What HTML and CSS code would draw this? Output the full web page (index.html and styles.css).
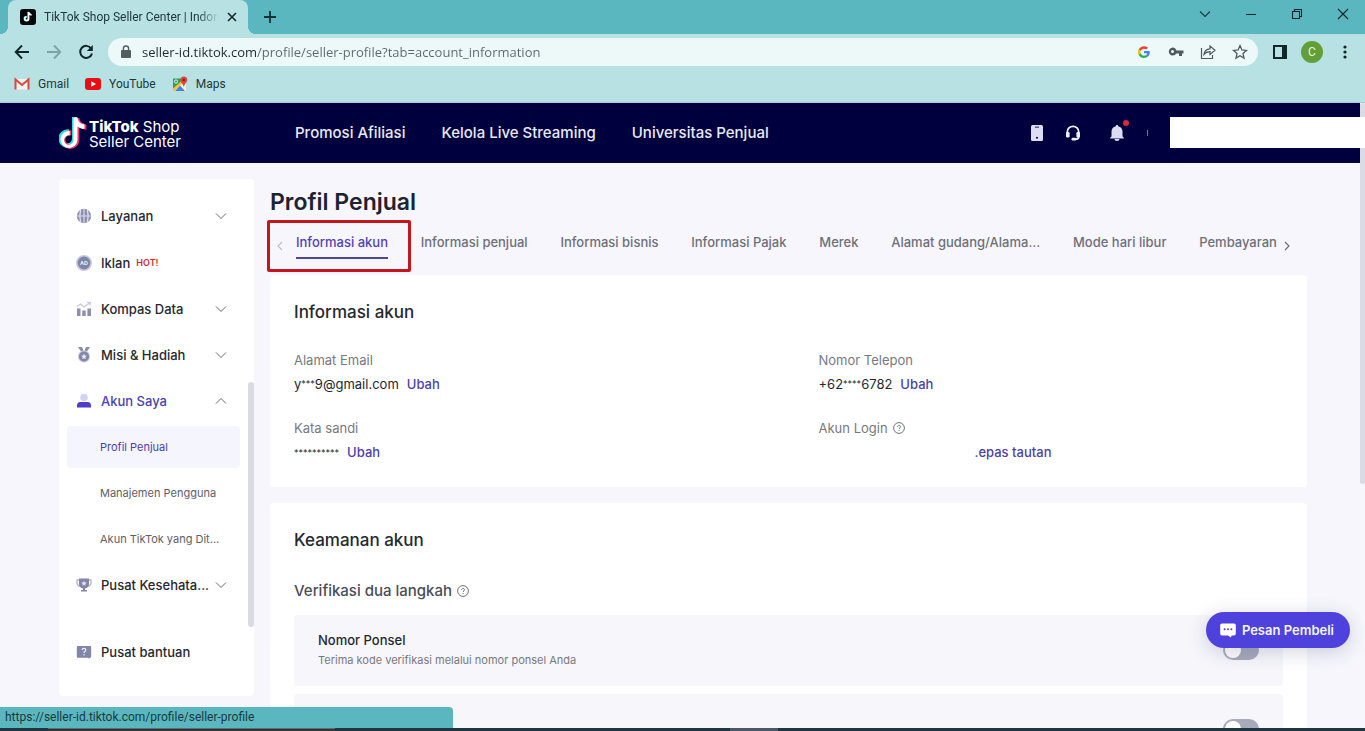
FILE: index.html
```html
<!DOCTYPE html>
<html lang="id">
<head>
<meta charset="utf-8">
<meta name="viewport" content="width=device-width, initial-scale=1">
<title>TikTok Shop Seller Center | Indonesia</title>
<link rel="stylesheet" href="styles.css">
</head>
<body>
<div class="window">
  <div class="tabstrip">
    <div class="browser-tab">
      <svg class="favicon" viewBox="0 0 16 16" width="16" height="16" aria-hidden="true"><rect width="16" height="16" rx="3" fill="#05080a"/><path d="M8.6 3v6.8a1.9 1.9 0 1 1-1.9-1.9M8.6 3.2c.3 1.6 1.4 2.6 3 2.8" fill="none" stroke="#25d5d0" stroke-width="1.7" transform="translate(-.4 -.3)"/><path d="M8.6 3v6.8a1.9 1.9 0 1 1-1.9-1.9M8.6 3.2c.3 1.6 1.4 2.6 3 2.8" fill="none" stroke="#fff" stroke-width="1.6"/></svg>
      <span class="browser-tab-title">TikTok Shop Seller Center | Indon</span>
      <button class="plain" aria-label="Tutup tab"><svg width="10" height="10" viewBox="0 0 10 10"><path d="M1 1l8 8M9 1L1 9" stroke="#1b2c30" stroke-width="1.7"/></svg></button>
    </div>
    <button class="plain new-tab" aria-label="Tab baru"><svg width="14" height="14" viewBox="0 0 14 14"><path d="M7 1v12M1 7h12" stroke="#123238" stroke-width="1.8"/></svg></button>
    <div class="window-controls">
      <button class="plain" aria-label="Cari tab"><svg width="12" height="12" viewBox="0 0 12 12"><path d="M1 3.500l5 5 5-5" fill="none" stroke="#14383e" stroke-width="1.1"/></svg></button>
      <button class="plain" aria-label="Perkecil"><svg width="12" height="12" viewBox="0 0 12 12"><path d="M1 6.500h10" stroke="#0d2328"/></svg></button>
      <button class="plain" aria-label="Pulihkan"><svg width="12" height="12" viewBox="0 0 12 12"><path d="M1.500 3.500h7v7h-7zM3.500 3.500v-2h7v7h-2" fill="none" stroke="#0d2328" stroke-width="1.100"/></svg></button>
      <button class="plain" aria-label="Tutup"><svg width="12" height="12" viewBox="0 0 12 12"><path d="M1 1l10 10M11 1L1 11" stroke="#0d2328" stroke-width="1.100"/></svg></button>
    </div>
  </div>

  <div class="toolbar">
    <div class="history">
      <button class="plain" aria-label="Kembali"><svg width="16" height="16" viewBox="0 0 16 16"><path d="M15 8H2M8 1.500L1.700 8 8 14.500" fill="none" stroke="#12262a" stroke-width="1.900"/></svg></button>
      <button class="plain" aria-label="Maju"><svg width="16" height="16" viewBox="0 0 16 16"><path d="M1 8h13M8 1.500L14.300 8 8 14.500" fill="none" stroke="#7fa3a6" stroke-width="1.900"/></svg></button>
      <button class="plain" aria-label="Muat ulang"><svg width="16" height="16" viewBox="0 0 16 16"><path d="M13.200 4.500A6 6 0 1 0 14 9.500" fill="none" stroke="#12262a" stroke-width="2"/><path d="M14.800 1v6H8.800z" fill="#12262a"/></svg></button>
    </div>
    <div class="omnibox">
      <svg width="10" height="14" viewBox="0 0 10 14" aria-hidden="true"><path d="M1 5h8a1 1 0 0 1 1 1v6a1 1 0 0 1-1 1H1a1 1 0 0 1-1-1V6a1 1 0 0 1 1-1z" fill="#555c60"/><path d="M2.400 5.500V3.600a2.600 2.600 0 0 1 5.200 0v1.900" fill="none" stroke="#555c60" stroke-width="1.400"/></svg>
      <input class="address" type="text" aria-label="Alamat situs" value="seller-id.tiktok.com/profile/seller-profile?tab=account_information">
      <div class="omnibox-actions">
        <svg width="12" height="12" viewBox="0 0 48 48" aria-hidden="true"><path fill="#ea4335" d="M24 10.500c3.500 0 6.700 1.200 9.200 3.600l6.900-6.900C35.900 3.400 30.500 1 24 1 14.600 1 6.500 6.400 2.600 14.200l8 6.200C12.500 14.700 17.700 10.500 24 10.500z"/><path fill="#4285f4" d="M47 24.500c0-1.600-.2-3.100-.4-4.500H24v9h12.900c-.6 3-2.200 5.500-4.700 7.200l7.700 6C44.400 38 47 31.800 47 24.500z"/><path fill="#fbbc05" d="M10.500 28.600a14.500 14.500 0 0 1 0-9.200l-8-6.200a24 24 0 0 0 0 21.600z"/><path fill="#34a853" d="M24 48c6.500 0 11.900-2.100 15.900-5.800l-7.700-6c-2.200 1.500-4.900 2.300-8.200 2.300-6.300 0-11.600-4.200-13.500-9.900l-8 6.200C6.500 42.600 14.600 48 24 48z"/></svg>
        <button class="plain" aria-label="Sandi"><svg width="16" height="16" viewBox="0 0 16 16"><path d="M4.500 3.500a4 4 0 0 1 3.800 3H15.500v3h-1.500v2.500h-3V9.500H8.300a4 4 0 1 1-3.800-6zm0 2.600a1.500 1.500 0 1 0 0 3 1.500 1.500 0 0 0 0-3z" fill="#50595c" fill-rule="evenodd"/></svg></button>
        <button class="plain" aria-label="Bagikan"><svg width="16" height="16" viewBox="0 0 16 16"><path d="M1.500 4v10.500h11V11M4 10.500c.3-3.500 2.300-5.500 6-5.700V2l5 4.200-5 4.200V7.700C7.500 7.700 5.500 8.500 4 10.500z" fill="none" stroke="#50595c" stroke-width="1.200"/></svg></button>
        <button class="plain" aria-label="Tandai"><svg width="16" height="16" viewBox="0 0 16 16"><path d="M8 1.600l1.900 4.300 4.600.5-3.500 3.100 1 4.600L8 11.700l-4 2.400 1-4.600L1.500 6.400l4.600-.5z" fill="none" stroke="#50595c" stroke-width="1.300"/></svg></button>
      </div>
    </div>
    <div class="toolbar-end">
      <button class="plain" aria-label="Panel samping"><svg width="14" height="14" viewBox="0 0 14 14"><path d="M1 1h12v12H1z" fill="none" stroke="#12262a" stroke-width="2"/><path d="M9 1h4v12H9z" fill="#12262a"/></svg></button>
      <button class="plain avatar" aria-label="Profil C">C</button>
      <button class="plain" aria-label="Menu"><svg width="4" height="14" viewBox="0 0 4 14"><g fill="#12262a"><circle cx="2" cy="2" r="1.600"/><circle cx="2" cy="7" r="1.600"/><circle cx="2" cy="12" r="1.600"/></g></svg></button>
    </div>
  </div>

  <nav class="bookmarks" aria-label="Bookmark">
    <a href="#gmail"><svg width="16" height="16" viewBox="0 0 16 16" aria-hidden="true"><path d="M2 3h12v10.500H2z" fill="#f5f2ef"/><path d="M1.500 13.500v-10L8 9l6.500-5.500v10" fill="none" stroke="#d8493e" stroke-width="2"/></svg>Gmail</a>
    <a href="#youtube"><svg width="16" height="16" viewBox="0 0 16 16" aria-hidden="true"><rect y="2" width="16" height="12" rx="3" fill="#e60f12"/><path d="M6.300 5.200v5.600L11 8z" fill="#fff"/></svg>YouTube</a>
    <a href="#maps"><svg width="16" height="16" viewBox="0 0 16 16" aria-hidden="true"><path d="M1 2.500h9.500L13 15H1z" fill="#2f9f58"/><path d="M1 13L12 4l2 3v8H1z" fill="#f4f3df"/><path d="M3 15l5-5.500 5 5.500z" fill="#4a7fe0"/><path d="M1 12.500L9.500 5l1 2L2.500 15H1z" fill="#f2c534"/><circle cx="4" cy="5.500" r="1.600" fill="none" stroke="#eef7f0"/><path d="M11.800.5a3.500 3.500 0 0 1 3.500 3.500c0 2.200-2.300 3.200-3.300 6.500h-.4C10.600 7.200 8.300 6.200 8.300 4A3.500 3.500 0 0 1 11.800.5z" fill="#d9493b"/><circle cx="11.800" cy="4" r="1.200" fill="#7c201b"/></svg>Maps</a>
  </nav>

  <div class="viewport">
    <div class="page">
      <header class="site-header">
        <a class="logo" href="#home" aria-label="TikTok Shop Seller Center">
          <svg width="28" height="32" viewBox="0 0 28 32" aria-hidden="true"><path d="M13 0h5c.4 3.600 3 6.200 7 6.500v5c-2.600 0-5-.8-7-2.300V22A9.300 9.300 0 1 1 8.700 12.300h1.300v5.200a4.500 4.500 0 1 0 3 4.300z" fill="#38d9df"/><path d="M13 0h5c.4 3.600 3 6.200 7 6.500v5c-2.600 0-5-.8-7-2.300V22A9.300 9.300 0 1 1 8.700 12.300h1.300v5.200a4.500 4.500 0 1 0 3 4.300z" fill="#ea3c67" transform="translate(2.400 1)"/><path d="M13 0h4c.4 4 3 6.600 7 6.900v4.300c-2.600 0-5-.8-7-2.300V22A8.500 8.500 0 1 1 8.700 13.500h.5v4.400a4.700 4.700 0 1 0 3.800 4.300z" fill="#fff" transform="translate(1.500 .5)"/></svg>
          <span class="logo-text"><span><b>TikTok</b> Shop</span><span>Seller Center</span></span>
        </a>
        <nav class="main-nav" aria-label="Utama">
          <a href="#afiliasi">Promosi Afiliasi</a>
          <a href="#live">Kelola Live Streaming</a>
          <a href="#universitas">Universitas Penjual</a>
        </nav>
        <div class="header-tools">
          <button class="plain" aria-label="Aplikasi seluler"><svg width="12" height="16" viewBox="0 0 12 16"><rect width="12" height="16" rx="1.500" fill="#dcdcf3"/><path d="M4 1.500h4v1.500H4z" fill="#5b5b8c"/><circle cx="6" cy="12.800" r="1" fill="#01003f"/></svg></button>
          <button class="plain" aria-label="Dukungan"><svg width="16" height="16" viewBox="0 0 16 16"><path d="M2.300 8.500V7a5.700 5.700 0 0 1 11.400 0v5c0 1.400-1 2.200-3 2.200" fill="none" stroke="#f1f1fb" stroke-width="1.800"/><rect x="1" y="7" width="3.600" height="5.500" rx="1.300" fill="#f1f1fb"/><rect x="11.400" y="7" width="3.600" height="5.500" rx="1.300" fill="#f1f1fb"/><rect x="6.500" y="12.800" width="5" height="2.800" rx="1.400" fill="#f1f1fb"/></svg></button>
          <button class="plain bell" aria-label="Notifikasi"><svg width="14" height="16" viewBox="0 0 14 16"><path d="M7 0c.8 0 1.200.5 1.200 1.200 2.600.6 4.300 2.600 4.300 5.300v5l1.300 1.300v.7H.2v-.7l1.300-1.300v-5c0-2.700 1.700-4.700 4.300-5.300C5.800.5 6.200 0 7 0zM4.500 14h5a2.500 2 0 0 1-5 0z" fill="#dcdcf3"/></svg></button>
          <span class="tool-divider"></span>
        </div>
        <div class="account-cover"></div>
      </header>

      <div class="body">
        <aside class="sidebar">
          <nav class="side-nav" aria-label="Menu penjual">
            <a class="side-item tall" href="#layanan"><svg width="16" height="16" viewBox="0 0 16 16"><circle cx="8" cy="8" r="7.200" fill="#8c8fae"/><path d="M8 1v14M1 8h14M4.800 1.500C3.500 6 3.500 10 4.800 14.500M11.200 1.500c1.300 4.500 1.300 8.500 0 13" fill="none" stroke="#dfe0f2" stroke-width="1.100"/></svg><span>Layanan</span><svg class="chev" viewBox="0 0 12 12"><path d="M1 3.500l5 5 5-5"/></svg></a>
            <a class="side-item tall" href="#iklan"><svg width="16" height="16" viewBox="0 0 16 16"><circle cx="8" cy="8" r="8" fill="#c9cae0"/><circle cx="8" cy="8" r="6.400" fill="#8285a8"/><text x="8" y="10.200" class="ad-text">AD</text></svg><span>Iklan</span><span class="hot">HOT!</span></a>
            <a class="side-item" href="#kompas"><svg width="16" height="16" viewBox="0 0 16 16"><path d="M1 7.500h3.500V15H1zM6.200 9.500h3.500V15H6.200zM11.400 7.500H15V15h-3.600z" fill="#8c8fae"/><path d="M1 5.500l3.500-2.500 3.500 3 5.500-4M11 1.200l3.500.3-.8 3.200" fill="none" stroke="#c5c6dc" stroke-width="1.100"/></svg><span>Kompas Data</span><svg class="chev" viewBox="0 0 12 12"><path d="M1 3.500l5 5 5-5"/></svg></a>
            <a class="side-item" href="#misi"><svg width="16" height="16" viewBox="0 0 16 16"><path d="M2 0h4l1.500 3.500-2.500 1zM14 0h-4L8.500 3.500l2.500 1z" fill="#8c8f9f"/><circle cx="8" cy="9.500" r="6" fill="#c5c6dc"/><circle cx="8" cy="9.500" r="5" fill="#8285a8"/><path d="M8 6.600l.9 1.900 2 .3-1.500 1.400.4 2L8 11.200l-1.800 1 .4-2-1.500-1.400 2-.3z" fill="#e6e6f6"/></svg><span>Misi &amp; Hadiah</span><svg class="chev" viewBox="0 0 12 12"><path d="M1 3.500l5 5 5-5"/></svg></a>
            <a class="side-item active" href="#akun"><svg width="16" height="16" viewBox="0 0 16 16"><circle cx="8" cy="4.500" r="3.800" fill="#d5d3f5"/><path d="M1 14.500v-2.500A3.500 3.500 0 0 1 4.500 9h7A3.500 3.500 0 0 1 15 12v2.500z" fill="#4d3dc8"/></svg><span>Akun Saya</span><svg class="chev" viewBox="0 0 12 12"><path d="M1 8.500l5-5 5 5"/></svg></a>
            <a class="sub-item current" href="#profil">Profil Penjual</a>
            <a class="sub-item" href="#pengguna">Manajemen Pengguna</a>
            <a class="sub-item" href="#tiktok">Akun TikTok yang Dit...</a>
            <a class="side-item" href="#kesehatan"><svg width="16" height="16" viewBox="0 0 16 16"><path d="M3.500 3H1v3c0 2 1.300 3 3 3M12.500 3H15v3c0 2-1.300 3-3 3" fill="none" stroke="#b4b6d0" stroke-width="1.300"/><path d="M3 1.500h10V7c0 2.500-1.600 4-4 4.500V13h2v1.500H5V13h2v-1.500C4.600 11 3 9.500 3 7z" fill="#8285a8"/><path d="M8 3.700l.8 1.700 1.800.2-1.300 1.300.3 1.800L8 7.800l-1.600.9.300-1.800-1.300-1.300 1.800-.2z" fill="#e6e6f6"/></svg><span>Pusat Kesehata...</span><svg class="chev" viewBox="0 0 12 12"><path d="M1 3.500l5 5 5-5"/></svg></a>
          </nav>
          <a class="side-item help" href="#bantuan"><svg width="16" height="16" viewBox="0 0 16 16"><path d="M2 2h12a1.200 1.200 0 0 1 1.200 1.200v9.300A1.200 1.200 0 0 1 14 13.700l-1 .8-1.600-.8H2A1.200 1.200 0 0 1 .8 12.500V3.200A1.200 1.200 0 0 1 2 2z" fill="#8285a8"/><path d="M6.200 6c0-2.300 3.600-2.300 3.600 0 0 1.300-1.800 1.400-1.800 3M8 10.300v1.300" fill="none" stroke="#f0f0fb" stroke-width="1.200"/></svg><span>Pusat bantuan</span></a>
          <span class="side-scroll"></span>
        </aside>

        <main class="main">
          <h1>Profil Penjual</h1>
          <div class="tabs">
            <button class="plain arrow faded" aria-label="Sebelumnya"><svg width="6" height="10" viewBox="0 0 6 10"><path d="M5 1L1 5l4 4" fill="none" stroke="currentColor" stroke-width="1.100"/></svg></button>
            <nav class="tab-list" aria-label="Tab profil">
              <a class="tab selected" href="#t1">Informasi akun<span class="highlight"></span></a>
              <a class="tab" href="#t2">Informasi penjual</a>
              <a class="tab" href="#t3">Informasi bisnis</a>
              <a class="tab" href="#t4">Informasi Pajak</a>
              <a class="tab" href="#t5">Merek</a>
              <a class="tab" href="#t6">Alamat gudang/Alama...</a>
              <a class="tab" href="#t7">Mode hari libur</a>
              <a class="tab" href="#t8">Pembayaran</a>
            </nav>
            <button class="plain arrow" aria-label="Berikutnya"><svg width="6" height="10" viewBox="0 0 6 10"><path d="M1 1l4 4-4 4" fill="none" stroke="currentColor" stroke-width="1.100"/></svg></button>
          </div>

          <section class="card">
            <h2>Informasi akun</h2>
            <dl class="fields">
              <div><dt>Alamat Email</dt><dd><span>y<span class="mask">***</span>9@gmail.com</span> <a href="#email">Ubah</a></dd></div>
              <div><dt>Nomor Telepon</dt><dd><span>+62<span class="mask">****</span>6782</span> <a href="#telepon">Ubah</a></dd></div>
              <div><dt>Kata sandi</dt><dd><span class="mask">**********</span> <a href="#sandi">Ubah</a></dd></div>
              <div><dt>Akun Login <svg class="q" viewBox="0 0 12 12"><circle cx="6" cy="6" r="5.400"/><path d="M4.600 4.900c0-2 2.900-2 2.900-.1 0 1-1.400 1-1.400 2.200M6.100 8v1"/></svg></dt><dd class="login"><a href="#lepas">.epas tautan</a></dd></div>
            </dl>
          </section>

          <section class="card">
            <h2>Keamanan akun</h2>
            <h3>Verifikasi dua langkah <svg class="q" viewBox="0 0 12 12"><circle cx="6" cy="6" r="5.400"/><path d="M4.600 4.900c0-2 2.900-2 2.900-.1 0 1-1.400 1-1.400 2.200M6.100 8v1"/></svg></h3>
            <div class="methods">
              <div class="method">
                <label for="phone-2fa"><strong>Nomor Ponsel</strong><span>Terima kode verifikasi melalui nomor ponsel Anda</span></label>
                <input id="phone-2fa" class="switch" type="checkbox" role="switch">
              </div>
              <div class="method">
                <label for="email-2fa"></label>
                <input id="email-2fa" class="switch" type="checkbox" role="switch" aria-label="Metode kedua">
              </div>
            </div>
          </section>
        </main>
      </div>
    </div>
    <div class="page-scroll"><span></span></div>
    <button class="chat"><svg width="16" height="16" viewBox="0 0 16 16" aria-hidden="true"><path d="M2 1.500h12A1.800 1.800 0 0 1 15.800 3.300v8.400A1.800 1.800 0 0 1 14 13.500h-2.500l-.5 2-3-2H2A1.800 1.800 0 0 1 .2 11.700V3.300A1.800 1.800 0 0 1 2 1.500z" fill="#fff"/><g fill="#4f42dc"><circle cx="4.600" cy="7.300" r="1"/><circle cx="8" cy="7.300" r="1"/><circle cx="11.400" cy="7.300" r="1"/></g></svg>Pesan Pembeli</button>
    <div class="status">https://seller-id.tiktok.com/profile/seller-profile</div>
  </div>
  <div class="taskbar"><span class="task-search"></span><span class="task-active"></span></div>
</div>
</body>
</html>
```
FILE: styles.css
```css
* { box-sizing: border-box; }
body { margin: 0; font: 13px/20px Inter, sans-serif; color: #25282f; }
a { color: inherit; text-decoration: none; }
svg { display: block; flex: none; }
h1, h2, h3, dl, dd { margin: 0; }
.plain { display: grid; place-items: center; padding: 0; border: 0; background: none; color: inherit; font: inherit; }

.window { display: flex; flex-direction: column; height: 100vh; overflow: hidden; }

/* Browser chrome */
.tabstrip, .toolbar, .bookmarks, .status { font-family: Roboto, "Noto Sans", sans-serif; font-size: 12px; color: #20383c; }
.tabstrip { display: flex; align-items: center; height: 34px; background: #5bb7bf; }
.browser-tab { position: relative; display: flex; align-items: center; align-self: stretch; gap: 8px; width: 240px; margin-left: 8px; padding: 0 11px 0 12px; border-radius: 8px 8px 0 0; background: #b7e1e3; }
.browser-tab::before, .browser-tab::after { content: ""; position: absolute; bottom: 0; width: 8px; height: 8px; }
.browser-tab::before { left: -8px; background: radial-gradient(circle at 0 0, transparent 8px, #b7e1e3 8px); }
.browser-tab::after { right: -8px; background: radial-gradient(circle at 100% 0, transparent 8px, #b7e1e3 8px); }
.browser-tab-title { flex: 1; overflow: hidden; white-space: nowrap; mask-image: linear-gradient(90deg, #000 88%, transparent); }
.new-tab { width: 28px; height: 28px; margin-left: 8px; }
.window-controls { display: flex; gap: 34px; margin: 0 16px 6px auto; }

.toolbar { display: flex; align-items: center; height: 36px; background: #b7e1e3; }
.history { display: flex; gap: 16px; padding: 0 14px; }
.omnibox { display: flex; flex: 1; align-items: center; gap: 11px; height: 28px; padding: 0 10px 0 13px; border-radius: 14px; background: #edf8f9; }
.address { flex: 1; min-width: 0; padding: 0; border: 0; outline: 0; font: 13px/20px "Open Sans", "Noto Sans", sans-serif; color: transparent; background: linear-gradient(90deg, #1d2a2e 115px, #5c686b 115px); -webkit-background-clip: text; background-clip: text; }
.omnibox-actions { display: flex; align-items: center; gap: 16px; }
.omnibox-actions > :first-child { margin-right: 2px; }
.toolbar-end { display: flex; align-items: center; gap: 14px; padding: 0 18px 0 15px; }
.toolbar-end .avatar { width: 22px; height: 22px; border-radius: 50%; background: #639f38; color: #eaf6df; font: 12px/22px Roboto, sans-serif; }
.toolbar-end > :last-child { margin-left: 6px; }

.bookmarks { display: flex; gap: 16px; align-items: center; height: 33px; padding: 0 14px 5px; border-bottom: 1px solid #a9cbdc; background: #b7e1e3; }
.bookmarks a { display: flex; align-items: center; gap: 8px; }

/* Page frame */
.viewport { position: relative; display: flex; flex: 1; min-height: 0; overflow: hidden; background: #f6f6fc; }
.page { flex: 1; min-width: 0; }
.page-scroll { width: 5px; background: #f6f6fc; }
.page-scroll span { display: block; height: 61%; border-radius: 3px; background: #dadbe4; }

.site-header { display: flex; align-items: center; height: 60px; padding-left: 59px; background: #01003f; color: #e9e9f6; }
.logo { display: flex; gap: 2px; width: 236px; color: #fff; }
.logo-text { display: flex; flex-direction: column; padding-top: 2px; font: 15px/15px Inter, sans-serif; }
.logo-text b { font-weight: 800; }
.main-nav { display: flex; gap: 36px; font-size: 15px; font-weight: 500; white-space: nowrap; }
.header-tools { display: flex; align-items: center; margin-left: auto; gap: 22px; }
.bell { position: relative; margin: 0 1px 0 7px; }
.bell::after { content: ""; position: absolute; top: -5px; right: -5px; width: 6px; height: 6px; border-radius: 50%; background: #d8293c; }
.tool-divider { width: 1px; height: 6px; background: #73739e; }
.account-cover { position: relative; z-index: 1; align-self: flex-start; width: 195px; height: 31px; margin: 14px -5px 0 22px; background: #fff; }

.body { display: flex; align-items: flex-start; gap: 16px; padding: 16px 53px 0 59px; }

/* Sidebar */
.sidebar { position: relative; flex: none; width: 195px; padding: 13px 8px 20px; border-radius: 4px; background: #fff; }
.side-nav { display: flex; flex-direction: column; padding-bottom: 20px; }
.side-item { display: flex; align-items: center; height: 46px; padding: 0 19px 0 9px; color: #25282f; font-weight: 500; white-space: nowrap; }
.side-item > :first-child { margin-right: 9px; }
.side-item.tall { height: 47px; }
.side-item.active { color: #4d3fb8; }
.side-item.help { height: 48px; }
.side-item .chev { width: 12px; height: 12px; margin-left: auto; fill: none; stroke: #686b73; stroke-width: 1; }
.hot { margin-left: 6px; color: #cf2b35; font-size: 9px; font-weight: 600; }
.ad-text { fill: #e8e8f6; font: 700 6px Roboto, sans-serif; text-anchor: middle; }
.sub-item { display: flex; align-items: center; height: 42px; margin: 2px 6px 2px 0; padding-left: 33px; border-radius: 4px; color: #5d6068; font-size: 11px; white-space: nowrap; }
.sub-item.current { background: #f5f5fe; color: #4d3fa8; }
.side-scroll { position: absolute; top: 203px; right: 0; width: 6px; height: 245px; border-radius: 3px; background: #d9dae3; }

/* Main column */
.main { flex: 1; min-width: 0; padding-top: 8px; }
h1 { font-size: 23px; line-height: 30px; font-weight: 600; color: #1c2430; }
.tabs { display: flex; align-items: center; gap: 7px; margin: 15px 0 16px; padding: 0 17px 0 7px; }
.arrow { width: 6px; margin-left: 0; color: #666973; }
.arrow.faded { margin-right: 6px; color: #b9bac5; }
.tab-list { display: flex; flex: 1; justify-content: space-between; min-width: 0; white-space: nowrap; }
.tab { position: relative; padding-bottom: 5px; border-bottom: 2px solid transparent; color: #6e7079; font-weight: 500; }
.tab.selected { border-color: #50459c; color: #5242b4; }
.highlight { position: absolute; inset: -12px -23px -15px -29px; border: 3px solid #c4161c; border-radius: 2px; }

.card { margin-bottom: 16px; padding: 25px 24px 23px; border-radius: 4px; background: #fff; }
h2 { font-size: 17px; line-height: 24px; font-weight: 500; }
.fields { display: grid; grid-template-columns: 1fr 1fr; gap: 20px 60px; margin-top: 24px; }
.fields dt, .fields dd { display: flex; align-items: center; height: 24px; }
.fields dt { gap: 5px; color: #777980; }
.fields dd { gap: 8px; }
.fields a { color: #4d3fa8; font-weight: 500; }
.fields .login { padding-left: 156px; }
.mask { font-size: 9px; vertical-align: 2px; line-height: 1; }
.q { width: 12px; height: 12px; fill: none; stroke: #70737b; stroke-width: 1; }
h3 { display: flex; align-items: center; gap: 5px; margin: 27px 0 12px; font-size: 15px; line-height: 24px; font-weight: 500; color: #4a4d56; }
.methods { display: flex; flex-direction: column; gap: 8px; }
.method { display: flex; align-items: center; justify-content: space-between; min-height: 71px; padding: 15px 24px 16px; border-radius: 4px; background: #f6f6fb; }
.method label { display: flex; flex-direction: column; }
.method strong { font-weight: 500; }
.method label span { color: #777980; font-size: 11px; }
.switch { appearance: none; width: 36px; height: 20px; margin: 0; padding: 2px; border-radius: 10px; background: #a8abbb; }
.switch::before { content: ""; display: block; width: 16px; height: 16px; border-radius: 50%; background: #fff; }

/* Overlays */
.chat { position: absolute; right: 15px; bottom: 80px; display: flex; align-items: center; gap: 6px; height: 36px; padding: 0 16px 0 14px; border: 0; border-radius: 18px; background: #4f42dc; box-shadow: 0 4px 20px rgba(40, 40, 90, .2); color: #f4f4ff; font: 600 13px/20px Inter, sans-serif; }
.status { position: absolute; left: 0; bottom: 0; width: 453px; height: 21px; padding-left: 5px; border-radius: 0 4px 0 0; background: #5bb7bf; line-height: 21px; color: #173a40; }
.taskbar { display: flex; height: 3px; background: #1f3540; }
.task-search { width: 21%; margin-left: 48px; border-top: 1px solid #5d6b70; background: #303534; }
.task-active { width: 48px; margin-left: 395px; background: #4c5866; }
```
